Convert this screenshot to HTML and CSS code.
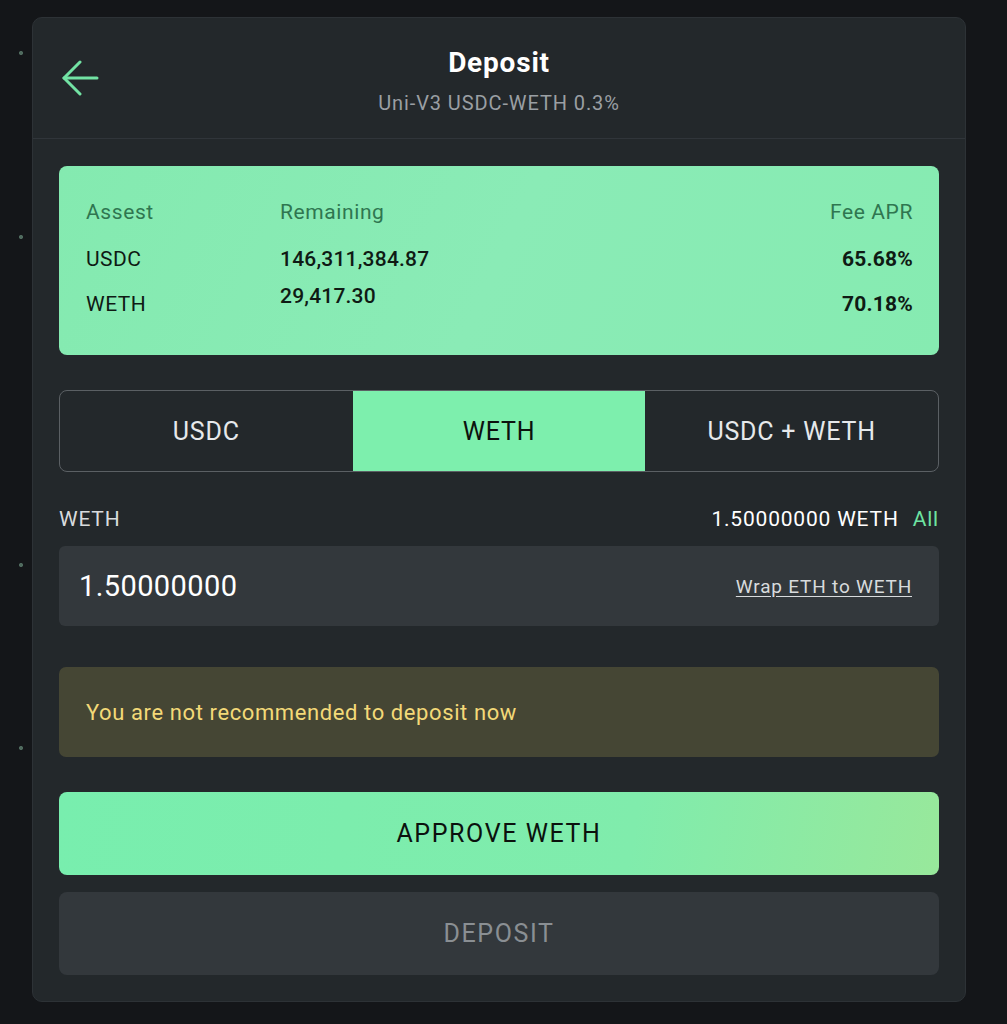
FILE: index.html
```html
<!DOCTYPE html>
<html lang="en">
<head>
  <meta charset="UTF-8">
  <meta name="viewport" content="width=device-width, initial-scale=1.0">
  <title>Deposit</title>
  <link rel="stylesheet" href="styles.css">
</head>
<body>
  <div class="modal">
    <!-- Header -->
    <div class="modal-header">
      <button class="back-btn" aria-label="Back">
        <svg width="38" height="38" viewBox="0 0 38 38" fill="none" stroke="#72e3a4" stroke-width="3" stroke-linecap="round" stroke-linejoin="round">
          <path d="M36 18 H3"/>
          <path d="M19 2 L3 18 L19 34"/>
        </svg>
      </button>
      <div class="title">Deposit</div>
      <div class="subtitle">Uni-V3 USDC-WETH 0.3%</div>
    </div>

    <div class="modal-body">
      <!-- Pool info -->
      <div class="pool-info">
        <div class="info-head">Assest</div>
        <div class="info-head">Remaining</div>
        <div class="info-head right">Fee APR</div>

        <div class="info-cell">USDC</div>
        <div class="info-cell num">146,311,384.87</div>
        <div class="info-cell num right bold">65.68%</div>

        <div class="info-cell">WETH</div>
        <div class="info-cell num raised">29,417.30</div>
        <div class="info-cell num right bold">70.18%</div>
      </div>

      <!-- Token tabs -->
      <div class="tabs">
        <div class="tab">USDC</div>
        <div class="tab active">WETH</div>
        <div class="tab">USDC + WETH</div>
      </div>

      <div class="amount-label">
        <span>WETH</span>
        <span class="balance">1.50000000 WETH <a class="all-link">All</a></span>
      </div>

      <div class="amount-input">
        <span class="amount-value">1.50000000</span>
        <a class="wrap-link">Wrap ETH to WETH</a>
      </div>

      <div class="warning">You are not recommended to deposit now</div>

      <button class="btn btn-approve">APPROVE WETH</button>
      <button class="btn btn-deposit" disabled>DEPOSIT</button>
    </div>
  </div>
</body>
</html>
```

FILE: styles.css
```css
  /* General styles */
  body {
    margin: 0;
    min-height: 1024px;
    padding: 17px 0 0 32px;
    box-sizing: border-box;
    font-family: 'Roboto', 'Liberation Sans', sans-serif;
    color: #e9ecee;
    background-color: #141619;
    /* faint dots on the left rail */
    background-image:
      radial-gradient(circle at 21px 53px, #4f6a5e 1.6px, transparent 2.4px),
      radial-gradient(circle at 21px 237px, #4f6a5e 1.6px, transparent 2.4px),
      radial-gradient(circle at 21px 565px, #4f6a5e 1.6px, transparent 2.4px),
      radial-gradient(circle at 21px 748px, #4f6a5e 1.6px, transparent 2.4px);
  }

  .modal {
    width: 934px;
    height: 985px;
    box-sizing: border-box;
    background-color: #23282b;
    border: 1px solid #2d3236;
    border-radius: 10px;
  }

  /* Header */
  .modal-header {
    position: relative;
    height: 121px;
    box-sizing: border-box;
    border-bottom: 1px solid #30353a;
    text-align: center;
    padding-top: 27px;
  }

  .back-btn {
    position: absolute;
    left: 28px;
    top: 42px;
    background: none;
    border: none;
    padding: 0;
    cursor: pointer;
  }

  .title {
    font-size: 28px;
    font-weight: 700;
    letter-spacing: 0.8px;
    color: #ffffff;
    line-height: 36px;
  }

  .subtitle {
    margin-top: 8px;
    font-size: 20px;
    letter-spacing: 0.9px;
    color: #9a9fa3;
    line-height: 28px;
  }

  .modal-body {
    padding: 27px 26px 0 26px;
    display: flex;
    flex-direction: column;
  }

  /* Pool info card */
  .pool-info {
    height: 189px;
    box-sizing: border-box;
    padding: 32px 26px 0 27px;
    border-radius: 8px;
    background: linear-gradient(115deg, #84eab0 0%, #8aebb6 50%, #86ebb1 100%);
    display: grid;
    grid-template-columns: 194px 1fr auto;
    grid-auto-rows: 45px;
    color: #0f1a14;
  }

  .info-head {
    font-size: 21px;
    letter-spacing: 0.6px;
    color: #2f7650;
    line-height: 28px;
  }

  .info-cell {
    font-size: 21px;
    letter-spacing: 0.5px;
    line-height: 28px;
    padding-top: 2px;
  }

  .info-cell.num {
    font-weight: 500;
    letter-spacing: 0.2px;
  }

  .info-cell.raised {
    padding-top: 0;
    margin-top: -6px;
  }

  .right {
    text-align: right;
  }

  .bold {
    font-weight: 700 !important;
  }

  /* Tabs */
  .tabs {
    margin-top: 35px;
    height: 82px;
    box-sizing: border-box;
    display: grid;
    grid-template-columns: 1fr 1fr 1fr;
    border: 1.5px solid #5b6064;
    border-radius: 8px;
    overflow: hidden;
  }

  .tab {
    display: flex;
    align-items: center;
    justify-content: center;
    font-size: 25px;
    letter-spacing: 0.8px;
    color: #e6e9eb;
  }

  .tab.active {
    background-color: #7defad;
    color: #0c120e;
  }

  /* Amount */
  .amount-label {
    margin-top: 34px;
    display: flex;
    justify-content: space-between;
    font-size: 21px;
    letter-spacing: 0.8px;
    line-height: 26px;
    color: #d8dbdd;
  }

  .balance {
    color: #ffffff;
  }

  .all-link {
    color: #6ee3a2;
    margin-left: 8px;
  }

  .amount-input {
    margin-top: 14px;
    height: 80px;
    box-sizing: border-box;
    padding: 0 27px 0 20px;
    background-color: #33383c;
    border-radius: 6px;
    display: flex;
    align-items: center;
    justify-content: space-between;
  }

  .amount-value {
    font-size: 29px;
    letter-spacing: 0.4px;
    color: #ffffff;
  }

  .wrap-link {
    font-size: 19px;
    letter-spacing: 0.8px;
    color: #d8dbdd;
    text-decoration: underline;
    text-underline-offset: 3px;
  }

  /* Warning */
  .warning {
    margin-top: 41px;
    height: 90px;
    box-sizing: border-box;
    padding: 0 27px;
    background-color: #454634;
    border-radius: 7px;
    display: flex;
    align-items: center;
    font-size: 22px;
    letter-spacing: 0.6px;
    color: #f3d978;
  }

  /* Buttons */
  .btn {
    height: 83px;
    border: none;
    border-radius: 8px;
    font-family: inherit;
    font-size: 25px;
    letter-spacing: 1.6px;
    cursor: pointer;
  }

  .btn-approve {
    margin-top: 35px;
    background: linear-gradient(100deg, #78eeae 0%, #80ecac 65%, #98e89b 100%);
    color: #0b110d;
  }

  .btn-deposit {
    margin-top: 17px;
    background-color: #33383c;
    color: #8a8f93;
    cursor: default;
  }
```
